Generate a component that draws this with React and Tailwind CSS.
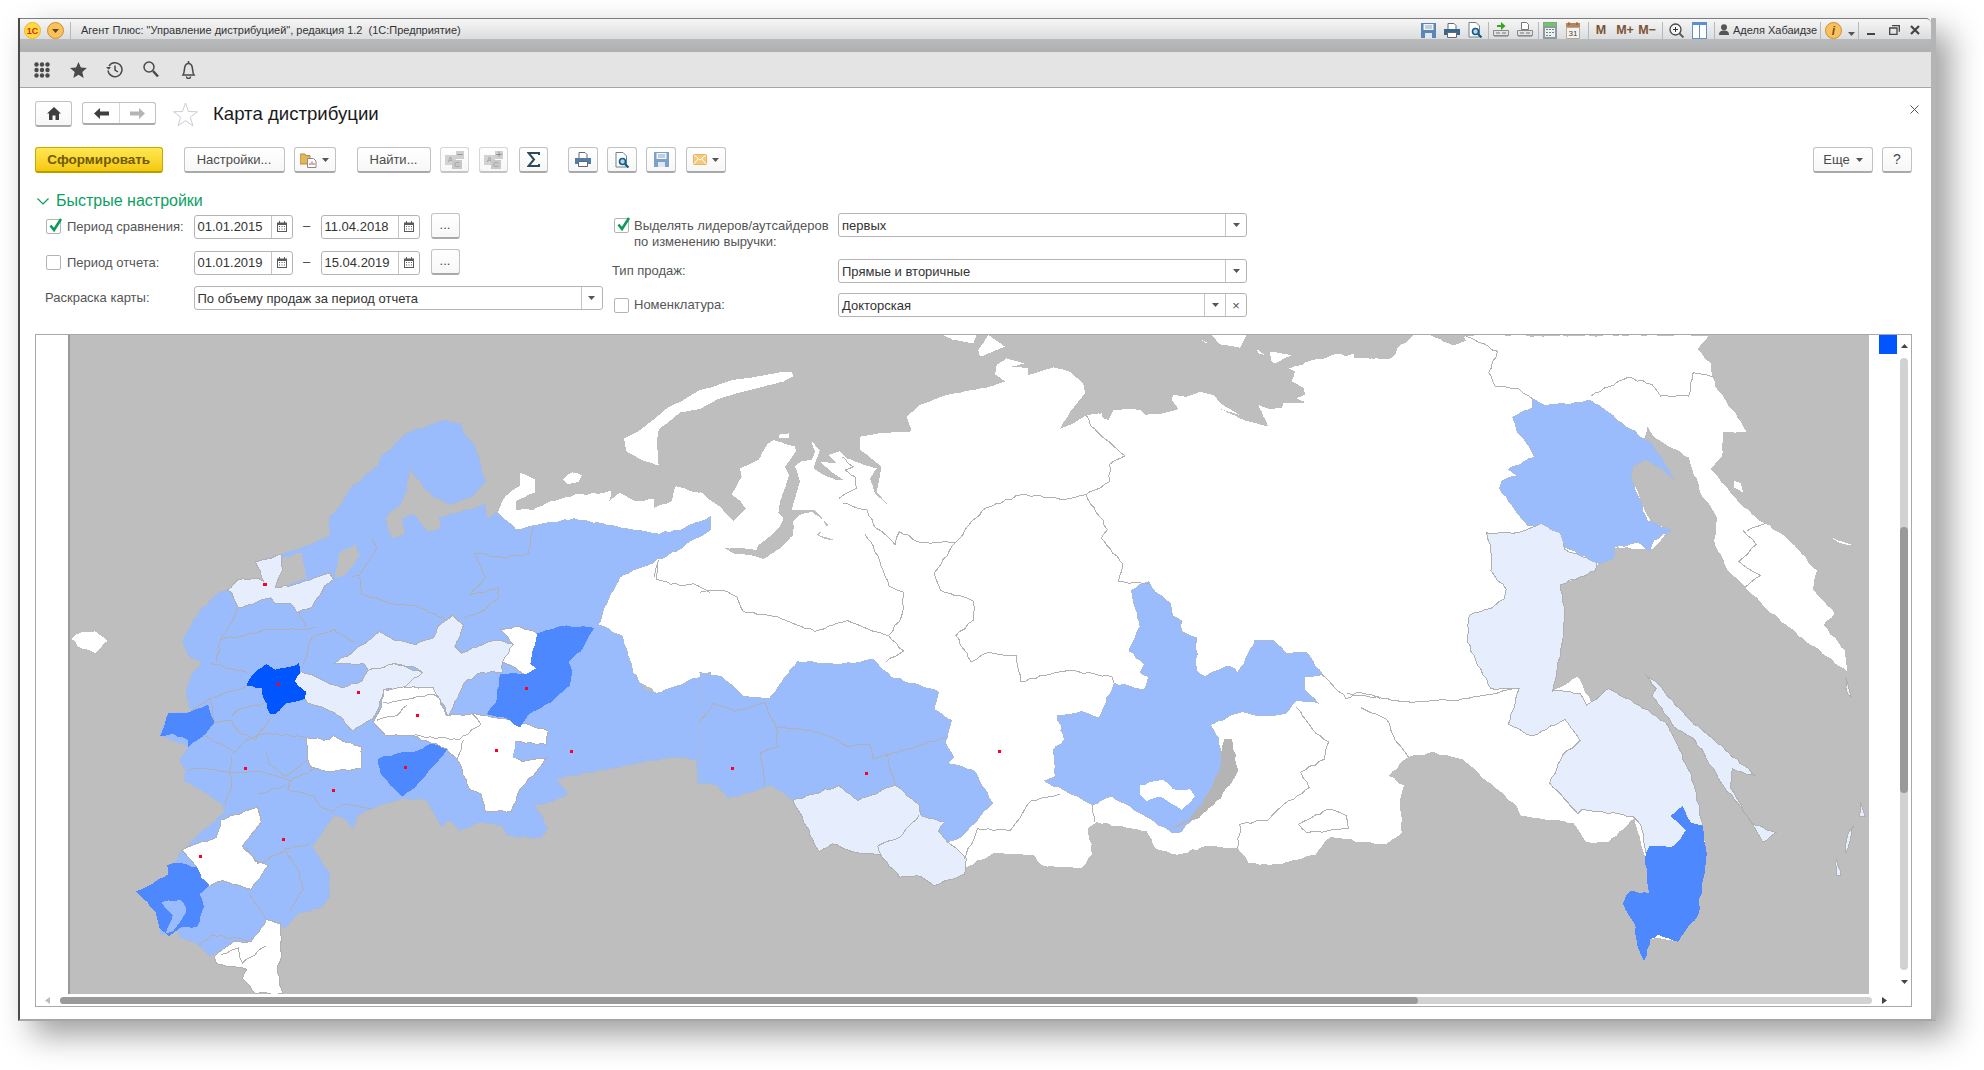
const FONT = { fontFamily: '"Liberation Sans", Arial, sans-serif' };

const SKY = '#9abbfc';
const PALE = '#e6edfd';
const MID = '#4d88ff';
const DEEP = '#0055ff';
const LINE = '#b0b0b0';

// coordinates were read off crops of the map
const Z4 = 'translate(30 330) scale(0.4336)';
const Z5 = 'translate(700 330) scale(0.4336)';
const Z6 = 'translate(1304 330) scale(0.4348 0.4719)';
const N1 = 'translate(700 335) scale(0.3333)';
const N2 = 'translate(1100 335) scale(0.3333)';

// breaks long straight edges into small wiggles, the source map is a rough raster
const hash = (a, b) => {
  const s = Math.sin(a * 12.9898 + b * 78.233) * 43758.5453;
  return s - Math.floor(s) - 0.5;
};

const rough = (points, closed, step = 11, amp = 5) => {
  const pts = points.trim().split(/\s+/).map((p) => p.split(',').map(Number));
  const out = [];
  const count = closed ? pts.length : pts.length - 1;
  for (let i = 0; i < count; i++) {
    const a = pts[i];
    const b = pts[(i + 1) % pts.length];
    out.push(a);
    const flip = a[0] > b[0] || (a[0] === b[0] && a[1] > b[1]);
    const [p, q] = flip ? [b, a] : [a, b];
    const dx = q[0] - p[0];
    const dy = q[1] - p[1];
    const len = Math.hypot(dx, dy);
    const n = Math.floor(len / step);
    const mids = [];
    for (let k = 1; k < n; k++) {
      const t = k / n;
      const off = hash(p[0] + k, p[1] + q[0] + q[1]) * amp;
      mids.push([p[0] + dx * t - (dy / len) * off, p[1] + dy * t + (dx / len) * off]);
    }
    if (flip) mids.reverse();
    out.push(...mids);
  }
  if (!closed) out.push(pts[pts.length - 1]);
  return out.map((c) => `${c[0].toFixed(1)},${c[1].toFixed(1)}`).join(' ');
};

const landZ5 = [
  '-467,425 -450,385 -415,360 -415,330 -380,345 -380,375 -425,395 -425,415 -385,415 -345,395 -275,378 -235,378 -205,370 -210,395 -185,375 -145,395 -105,390 -105,410 -65,395 -55,360 0,375 40,410 40,540 1568,540 1568,1185 1510,1175 1450,1170 1420,1210 1340,1232 1265,1230 1240,1195 1170,1190 1100,1210 1050,1195 1030,1155 915,1135 895,1150 905,1210 880,1240 790,1235 770,1210 680,1205 610,1240 570,1180 500,900 0,900 -467,600',
  '-315,345 -295,328 -273,335 -280,350 -305,355',
  '-1450,712 -1425,697 -1395,695 -1367,717 -1395,745 -1425,735',
];

const landN1 = [
  '0,470 30,495 60,515 100,558 138,522 120,497 95,480 125,425 120,400 175,375 205,325 220,315 285,335 288,350 255,395 268,420 240,500 235,535 250,550 240,575 215,600 175,630 170,645 130,640 100,640 75,640 100,655 150,660 190,672 240,640 280,600 280,560 300,540 335,530 370,555 380,575 350,600 375,612 405,615 370,605 355,600 385,570 345,525 275,525 300,440 285,395 305,378 335,375 345,350 335,320 360,345 340,400 370,420 410,435 430,435 400,415 360,380 410,385 385,360 420,348 440,370 510,395 530,400 510,430 525,475 565,510 530,470 545,395 520,375 480,345 480,305 540,295 630,290 610,305 635,285 620,245 660,210 740,180 870,155 915,140 885,118 890,90 920,70 975,85 935,95 985,100 985,120 1060,97 1110,110 1150,145 1155,175 1115,225 1060,310 1075,285 1120,265 1160,240 1205,235 1205,900 0,900',
  '-228,310 -189,291 -137,252 -98,219 -46,193 0,165 40,155 100,135 170,125 240,112 275,110 280,125 250,140 190,155 110,175 60,190 30,205 0,222 -59,232 -124,284 -130,323 -124,391 -176,375 -221,349',
  '240,298 268,295 268,308 235,310',
  '730,0 830,0 820,25 760,15',
  '865,0 915,35 840,65 835,45',
];

const landN2 = [
  '-5,235 10,250 25,255 40,225 80,222 120,225 135,240 190,235 235,222 215,195 220,180 260,185 300,170 340,180 365,208 395,225 420,240 360,222 440,258 505,275 475,210 510,222 545,220 550,205 620,205 590,190 635,172 595,150 575,140 585,110 565,100 630,82 690,72 660,95 700,95 715,115 700,80 760,55 765,75 815,70 860,75 890,65 905,35 940,0 990,0 1055,35 1100,15 1110,35 1090,5 1130,0 1215,0 1215,700 -5,700',
  '305,15 330,28 315,22',
  '470,42 495,60 475,55',
  '510,50 575,60 525,85 515,80',
  '335,0 440,0 420,38 360,28',
];

const landZ6 = [
  '0,70 50,60 75,50 120,60 200,60 225,30 260,12 290,12 355,38 385,30 370,12 930,12 905,40 935,70 945,120 985,170 1018,215 965,215 960,270 935,295 985,350 1030,390 1060,410 1110,440 1180,510 1170,550 1220,600 1195,625 1245,680 1250,725 1100,620 1015,545 975,510 945,455 950,400 910,340 885,270 835,245 800,220 790,205 750,310 800,410 840,425 800,465 720,460 680,495 590,540 590,680 572,765 630,735 660,790 700,790 700,760 770,795 830,830 850,890 890,940 915,1040 925,1110 905,1240 860,1295 800,1290 735,1215 750,1190 795,1195 785,1120 760,1035 700,1085 650,1085 620,1045 500,1030 490,1010 440,970 365,910 290,895 240,905 195,945 230,965 220,1000 225,1065 190,1090 60,1075 30,1105 0,1115',
  '990,320 1005,325 1010,345 990,335',
  '1215,440 1260,455 1225,448',
];

const baikal = '1210,945 1225,945 1240,1015 1200,1080 1150,1125 1085,1150 1130,1130 1170,1075 1200,1010';

const seaZ4 = [
  '585,525 625,515 637,570 585,590 565,595',
  '705,570 715,515 750,495 760,520 730,560',
];

const skyZ4 =
  '455,600 480,575 525,572 540,580 520,535 580,520 690,475 690,430 720,400 735,370 805,310 805,300 865,240 950,210 995,215 1000,240 1025,265 1050,350 1020,385 970,403 930,385 890,340 875,315 870,370 855,400 820,435 835,480 865,470 860,435 885,425 915,465 945,460 945,430 1035,408 1050,400 1055,435 1075,420 1120,460 1255,435 1440,470 1500,462 1570,430 1570,460 1470,520 1400,550 1360,570 1330,630 1310,680 1365,705 1390,790 1420,830 1445,838 1570,790 1570,1045 1540,1045 1535,990 1480,985 1290,1020 1215,1035 1240,1070 1195,1090 1165,1095 1195,1150 1180,1170 1130,1170 1100,1165 1090,1145 1040,1135 990,1155 965,1130 950,1145 915,1085 860,1080 830,1090 790,1105 755,1120 745,1150 730,1130 700,1120 680,1150 650,1190 690,1250 690,1310 665,1335 620,1345 590,1380 545,1360 510,1410 470,1410 450,1430 415,1445 390,1420 345,1400 340,1385 300,1395 300,1300 350,1200 450,1110 440,1090 400,1065 355,1040 360,1015 345,990 365,960 300,935 320,885 380,880 365,870 360,830 370,800 395,768 365,750 352,720 365,690 390,650 435,605';

const skyZ5 = [
  '0,790 50,800 100,845 160,850 225,765 330,770 400,760 440,800 550,835 540,875 580,900 565,950 585,985 570,1000 630,1015 675,1090 640,1130 600,1170 570,1180 550,1155 565,1135 510,1120 505,1095 450,1050 365,1085 320,1050 215,1085 165,1050 100,1070 65,1080 40,1050 0,1045',
  '995,600 1035,580 1050,605 1085,630 1090,660 1110,670 1110,695 1145,710 1145,785 1165,800 1220,775 1240,790 1255,770 1280,715 1320,715 1350,745 1400,745 1435,795 1395,800 1395,830 1425,860 1375,855 1350,885 1290,890 1250,880 1175,910 1195,940 1205,1010 1170,1070 1150,1110 1105,1160 1090,1160 1050,1135 950,1075 905,1095 870,1075 795,1040 820,1030 815,970 840,945 825,890 880,880 920,895 955,815 1025,830 1035,800 1015,790 1025,770 990,740 1015,685 1000,630',
];

const skyZ6 =
  '525,145 555,160 660,150 750,210 800,240 850,315 830,300 785,275 755,290 752,315 790,405 845,425 805,445 795,470 770,450 715,460 715,480 680,495 600,460 590,430 545,410 515,415 450,335 455,320 490,310 470,295 530,270 505,230 490,215 480,185 525,165';

const paleZ4 = [
  '455,600 480,575 525,572 540,580 520,535 580,517 582,555 565,595 620,585 690,560 700,575 680,590 650,640 615,652 600,630 565,630 555,618 480,640 465,605',
  '700,770 770,725 805,695 840,715 890,725 930,710 940,685 975,657 1000,680 980,730 995,745 1055,720 1085,715 1115,725 1090,765 1090,790 1040,790 1000,815 965,890 945,850 930,825 860,825 905,790 880,775 840,770 780,785 770,770 720,770',
  '610,800 625,788 660,800 720,825 765,810 780,785 840,770 905,790 860,825 815,830 805,870 790,897 745,925 720,895 675,870 640,860 610,820',
];

const paleZ5 = '215,1085 320,1050 365,1085 450,1050 505,1095 510,1120 565,1135 550,1155 570,1180 615,1220 610,1255 540,1282 510,1260 460,1262 415,1210 360,1205 305,1185 275,1203';

const paleZ6 = [
  '420,430 490,430 520,420 545,410 590,430 600,465 675,490 670,510 590,540 600,610 590,680 572,765 635,770 650,795 700,760 770,795 830,830 890,940 915,1040 915,1110 790,1115 775,1050 755,1030 640,1015 630,1025 565,960 595,900 635,870 600,825 525,860 470,835 495,760 430,760 395,700 375,660 380,605 430,590 460,570 465,550 430,510 430,470',
  '785,730 815,750 880,820 1040,945 985,930 980,970 1030,1045 1085,1065 1055,1085 1020,1030 960,960 900,870 850,840 800,775 810,760',
  '1245,735 1260,780 1250,770',
  '1280,1000 1290,1030 1278,1030',
  '1265,1050 1245,1110 1250,1070',
  '1225,1120 1235,1155 1225,1155',
];

const whiteZ4 = [
  '638,940 690,945 700,935 725,950 765,960 765,1010 700,1018 650,1010 640,985',
  '792,905 810,870 815,830 850,825 930,825 945,850 960,890 1020,885 1045,890 1090,895 1110,900 1195,925 1190,955 1120,950 1115,985 1135,995 1195,985 1130,1060 1110,1110 1050,1110 1040,1070 1015,1060 985,990 960,965 880,935 820,935',
  '1085,690 1130,685 1170,700 1160,740 1155,770 1170,780 1145,795 1090,765 1115,725',
  '350,1200 385,1185 430,1170 440,1130 525,1100 533,1135 490,1190 520,1225 550,1235 530,1265 510,1290 480,1280 445,1270 410,1285 395,1265 385,1240 360,1210',
  '425,1445 470,1410 510,1410 545,1360 578,1370 580,1440 570,1480 583,1530 520,1530 490,1495 500,1475 430,1462',
];

const midZ4 = [
  '1170,700 1225,683 1300,688 1270,740 1240,765 1250,790 1245,820 1210,850 1150,885 1130,915 1100,895 1055,885 1075,860 1085,795 1145,795 1170,780 1155,770 1160,740',
  '302,935 320,885 360,885 410,865 425,905 400,935 365,960 365,945 330,930',
  '803,990 845,978 885,975 925,955 950,965 960,968 925,1010 880,1060 860,1075 825,1040 810,1025',
  '245,1295 280,1280 320,1255 318,1235 345,1230 385,1240 395,1265 412,1280 390,1300 400,1330 385,1375 350,1375 320,1397 300,1380 290,1340 260,1310',
];

const midZ6 = '870,1010 890,1045 915,1050 925,1110 905,1240 860,1295 815,1280 795,1290 782,1335 770,1310 760,1255 735,1215 750,1190 795,1195 785,1120 795,1095 850,1095 880,1060 845,1030';

const deepZ4 = '500,820 515,795 545,772 565,785 620,770 622,790 610,810 636,835 632,850 590,860 565,885 555,885 540,850 535,825';

const bordersZ4 = [
  '480,640 470,665 440,715 430,765',
  '440,715 550,690 640,690 660,685',
  '415,768 500,790',
  '630,770 650,710 700,690 750,720',
  '620,650 635,685',
  '760,570 765,610 830,630 900,640 960,670',
  '1025,515 1090,525 1150,515 1155,490 1160,455',
  '1025,515 1050,570 1015,610 1080,595 1080,620 1040,650 1000,665',
  '790,480 800,500 790,520 760,565 740,570',
  '415,850 500,820',
  '370,880 415,850 425,905',
  '465,890 480,875 540,860',
  '465,900 480,925 520,945 555,895',
  '400,935 440,955 470,975 500,945 545,930 640,940',
  '545,975 550,1000 590,1030 640,990',
  '425,905 465,900',
  '365,1015 400,1010 460,1020 465,1050 450,1095',
  '465,985 460,1020 540,1020 600,1040',
  '600,1040 660,1010',
  '600,1040 595,1060 655,1075 670,1100 700,1110 720,1095 790,1105',
  '525,1070 590,1050',
  '500,1195 525,1230 570,1210 590,1195 645,1185',
  '590,1200 620,1250 630,1290 600,1340',
  '505,1300 545,1360',
  '390,1420 420,1395 510,1410',
  '815,860 850,855 930,840 945,850',
  '800,900 845,890 870,865',
  '880,935 990,945 1040,910 1020,885',
  '985,990 1000,945',
  '440,1440 480,1425 490,1460 545,1420',
  '1440,570 1450,530 1445,575 1500,590 1530,585 1568,605',
];

const bordersZ5 = [
  '0,605 50,600 85,615 100,650 170,660 265,695 340,670 400,695 435,705 470,740 430,765',
  '380,470 410,520 435,590 470,605 465,660 435,705',
  '400,450 450,495 460,465 510,490 590,490 620,450 660,410 740,380 830,390 890,380 940,460 925,480 975,540 965,580 1035,585',
  '590,490 540,560 555,600 630,625 630,670 590,705 625,765 660,745 730,750 740,810 850,785 950,800 955,815',
  '890,380 945,350 945,310 980,290 900,220 890,195',
  '330,400 385,415 400,450',
  '610,1220 640,1150 715,1155 765,1085 830,1070',
  '905,1095 910,1135',
  '1435,795 1490,850 1520,835 1568,850',
  '1375,870 1420,930 1450,950 1440,990 1385,1020 1405,1055 1340,1100 1310,1130 1245,1140 1240,1195',
  '1380,1140 1450,1105 1490,1120 1495,1150 1400,1160 1380,1140',
  '0,905 30,860 80,880 150,860 175,915 280,930 340,960 390,955 400,990 565,940',
  '175,915 180,960 140,975 150,1050',
  '430,975 450,1050',
  '505,1120 460,1170 410,1190 420,1215',
];

const bordersN1 = [
  '418,490 470,460 465,425 435,405 460,395 425,365',
];

const bordersZ6 = [
  '370,12 445,45 425,90 440,120 495,125 525,145',
  '660,140 745,100 800,115 820,140 885,140 895,90 945,100',
  '100,770 250,790 380,780 490,760',
  '130,800 190,825 210,870 240,905',
  '1010,425 1040,455 1000,490 1050,520 1015,545',
  '1060,410 1020,425',
];

const dotsZ4 = [[542, 586], [572, 817], [757, 835], [893, 888], [1144, 826], [1075, 969], [1248, 971], [867, 1008], [496, 1011], [699, 1061], [584, 1174], [393, 1214]];
const dotsZ5 = [[74, 1011], [383, 1022], [690, 971]];

const Fill = ({ items, fill, edge = LINE, amp = 5 }) =>
  [].concat(items).map((p, i) => (
    <polygon key={i} points={rough(p, true, 11, amp)} fill={fill} stroke={edge} strokeWidth="1" vectorEffect="non-scaling-stroke" />
  ));

const Lines = ({ items }) =>
  items.map((p, i) => (
    <polyline key={i} points={rough(p, false)} fill="none" stroke={LINE} strokeWidth="1" vectorEffect="non-scaling-stroke" />
  ));

const Dots = ({ items }) =>
  items.map(([x, y]) => <rect key={x} x={x - 3.5} y={y - 3.5} width="7" height="7" fill="#ff0022" />);

const DistributionMap = () => (
  <svg viewBox="70 335 1799 659" className="w-[1799px] h-[659px] block shrink-0" shapeRendering="crispEdges">
    <rect x="70" y="335" width="1799" height="659" fill="#bebebe" />
    <g transform={Z5}><Fill items={landZ5} fill="#ffffff" edge="none" /></g>
    <g transform={N1}><Fill items={landN1} fill="#ffffff" edge="none" amp={2} /></g>
    <g transform={N2}><Fill items={landN2} fill="#ffffff" edge="none" amp={2} /></g>
    <g transform={Z6}><Fill items={landZ6} fill="#ffffff" edge="none" /></g>
    <g transform={Z4}>
      <Fill items={skyZ4} fill={SKY} edge="#a9bbdc" />
      <Fill items={seaZ4} fill="#bebebe" edge="#bebebe" />
      <Fill items={paleZ4} fill={PALE} />
    </g>
    <g transform={Z5}>
      <Fill items={skyZ5} fill={SKY} edge="#a9bbdc" />
      <Fill items="1015,1050 1070,1040 1090,1060 1130,1060 1140,1075 1110,1105 1060,1075 1030,1085 1015,1070" fill="#ffffff" edge="#ffffff" />
      <Fill items={paleZ5} fill={PALE} />
      <Fill items={baikal} fill="#b4b4b4" edge="#b4b4b4" />
    </g>
    <g transform={Z6}>
      <Fill items={paleZ6} fill={PALE} />
      <Fill items={skyZ6} fill={SKY} edge="#a9bbdc" />
      <Fill items={midZ6} fill={MID} edge={MID} />
    </g>
    <g transform={Z4}>
      <Fill items={whiteZ4} fill="#ffffff" />
      <Fill items={midZ4} fill={MID} edge={MID} />
      <Fill items="305,1320 345,1315 360,1335 345,1365 330,1385 315,1390 330,1350" fill={SKY} edge={SKY} />
      <Fill items="1115,985 1120,950 1170,970 1140,985" fill={SKY} edge={SKY} />
      <Fill items={deepZ4} fill={DEEP} edge={DEEP} />
      <Lines items={bordersZ4} />
      <Dots items={dotsZ4} />
    </g>
    <g transform={Z5}>
      <Lines items={bordersZ5} />
      <Dots items={dotsZ5} />
    </g>
    <g transform={N1}><Lines items={bordersN1} /></g>
    <g transform={Z6}><Lines items={bordersZ6} /></g>
  </svg>
);

const Caret = ({ color = '#555' }) => (
  <svg width="7" height="4" viewBox="0 0 7 4"><path d="M0 0h7L3.5 4z" fill={color} /></svg>
);

const Btn = ({ className = '', children }) => (
  <button className={`h-[26px] flex items-center justify-center rounded-[3px] border border-[#c2c2c2] border-b-2 border-b-[#a9a9a9] bg-gradient-to-b from-white to-[#f7f7f7] text-[13px] text-[#4b4b4b] shrink-0 ${className}`}>
    {children}
  </button>
);

const Check = ({ on }) => (
  <span className="relative w-[15px] h-[15px] rounded-[2px] border border-[#b4b4b4] bg-white shrink-0 block">
    {on && (
      <svg className="absolute left-[1px] -top-[3px]" width="15" height="16" viewBox="0 0 15 16">
        <path d="M2.5 8.5 L6 13 L13 2" fill="none" stroke="#0c9a5a" strokeWidth="2.6" />
      </svg>
    )}
  </span>
);

const CalIcon = () => (
  <svg width="10" height="11" viewBox="0 0 10 11">
    <path d="M0 1.5h10V11H0z" fill="#5a5a5a" />
    <path d="M1 4h8v6H1z" fill="#fff" />
    <path d="M2 5h1v1H2zM4.5 5h1v1h-1zM7 5h1v1H7zM2 7.5h1v1H2zM4.5 7.5h1v1h-1zM7 7.5h1v1H7z" fill="#5a5a5a" />
    <path d="M2 0h1v2H2zM7 0h1v2H7z" fill="#5a5a5a" />
  </svg>
);

const DateField = ({ value }) => (
  <div className="w-[99px] h-[24px] mt-[1px] flex rounded-[3px] border border-[#b4b4b4] bg-white text-[13px] text-[#333] shrink-0">
    <span className="w-[77px] pl-[3px] leading-[22px] border-r border-[#c6c6c6]">{value}</span>
    <span className="flex-1 flex items-center justify-center"><CalIcon /></span>
  </div>
);

const Select = ({ value, width, clear }) => (
  <div className={`h-[24px] flex rounded-[3px] border border-[#b4b4b4] bg-white text-[13px] text-[#333] shrink-0 ${width}`}>
    <span className="flex-1 pl-[3px] leading-[23px]">{value}</span>
    <span className="w-[21px] flex items-center justify-center border-l border-[#c6c6c6]"><Caret /></span>
    {clear && <span className="w-[21px] flex items-center justify-center border-l border-[#c6c6c6] text-[13px] text-[#555] leading-none">×</span>}
  </div>
);

const DateRow = ({ on, label, from, to, className = '' }) => (
  <div className={`h-[26px] flex items-center ${className}`}>
    <span className="w-[158.5px] flex items-center pl-[11px] gap-[6px] pt-[1px]">
      <Check on={on} />
      <span className="text-[13px] text-[#555] whitespace-nowrap">{label}</span>
    </span>
    <DateField value={from} />
    <span className="w-[28px] text-center text-[13px] text-[#444]">–</span>
    <DateField value={to} />
    <Btn className="ml-[11px] w-[29px] text-[10px] pb-[2px]">...</Btn>
  </div>
);

const Slot = ({ w, children }) => (
  <span className={`flex items-center justify-center shrink-0 ${w}`}>{children}</span>
);

const Sep = ({ className = '' }) => <span className={`w-px h-[17px] bg-[#b8b8b8] shrink-0 ${className}`} />;

const SaveIcon = ({ c = '#5c86b4' }) => (
  <svg width="15" height="15" viewBox="0 0 15 15">
    <path d="M0 0h15v15H0z" fill={c} />
    <path d="M2.5 1h10v6h-10z" fill="#f2f6fb" />
    <path d="M4 10h7v5H4z" fill="#dfe8f2" />
    <path d="M4 3h7M4 5h7" stroke="#8aa8c8" />
  </svg>
);

const PrintIcon = ({ c = '#38668e' }) => (
  <svg width="16" height="15" viewBox="0 0 16 15">
    <path d="M4 .5h6l2 2v4H4z" fill="#fff" stroke="#667" />
    <path d="M0 6h16v6H0z" fill={c} />
    <path d="M3.5 9.5h9v5h-9z" fill="#fff" stroke="#667" />
  </svg>
);

const PreviewIcon = () => (
  <svg width="15" height="16" viewBox="0 0 15 16">
    <path d="M1 .5h7l3.5 3.5v11H1z" fill="#fff" stroke="#6f7f8f" />
    <circle cx="7.5" cy="9.5" r="3" fill="#bcd4e8" stroke="#0f5d86" strokeWidth="1.6" />
    <path d="M10 12l3.5 3.5" stroke="#0f5d86" strokeWidth="2.2" />
  </svg>
);

const TrayIcon = ({ arrow }) => (
  <svg width="16" height="16" viewBox="0 0 16 16">
    {arrow
      ? <path d="M4 3h4V0l4.5 4L8 8V5H4z" fill="#37a51c" />
      : <path d="M4.5.5h5l2 2v5h-7z" fill="#fff" stroke="#777" />}
    <path d="M.5 8.5h15v5H.5z" fill="#e3e3e3" stroke="#8a8a8a" />
    <path d="M3 11h4M9 11h4" stroke="#777" />
    <path d="M1 14.5h14" stroke="#a9a9a9" />
  </svg>
);

const AbcIcon = ({ sign }) => (
  <span className="relative w-[19px] h-[18px] block">
    <span className="absolute left-0 top-[4px] w-[11px] h-[10px] bg-[#d2d2d2] text-[8px] leading-[10px] text-[#9b9b9b] text-center">A</span>
    <span className="absolute left-[7px] top-[9px] w-[10px] h-[9px] bg-[#c8c8c8] text-[8px] leading-[9px] text-[#9b9b9b] text-center">C</span>
    <span className="absolute left-[11px] top-0 w-[8px] h-[8px] bg-[#cfcfcf] text-[11px] leading-[7px] text-[#8d8d8d] text-center">{sign}</span>
  </span>
);

const TitleMenu = () => (
  <div className="h-[34px] shrink-0 flex items-start pl-[4px] bg-[linear-gradient(to_bottom,#f6f6f6_0%,#dcdddf_60%,#b9babc_62%,#aeafb1_100%)] rounded-tr-[5px] border-t border-[#7d7d7d]">
    <div className="h-[22px] w-full flex items-center">
      <svg width="17" height="17" viewBox="0 0 17 17" className="shrink-0">
        <circle cx="8.5" cy="8.5" r="8" fill="#ffdc3c" stroke="#e8b533" />
        <text x="8.5" y="11.5" textAnchor="middle" fontSize="9" fontWeight="700" fill="#e2231a" style={FONT}>1С</text>
      </svg>
      <svg width="17" height="17" viewBox="0 0 17 17" className="ml-[6px] shrink-0">
        <circle cx="8.5" cy="8.5" r="8" fill="#fbc25b" stroke="#c98e33" />
        <path d="M5 7h7l-3.5 4z" fill="#5b4a2e" />
      </svg>
      <Sep className="ml-[6px]" />
      <span className="ml-[10px] text-[11px] text-[#333] whitespace-pre">Агент Плюс: "Управление дистрибуцией", редакция 1.2  (1С:Предприятие)</span>
      <div className="ml-auto flex items-center pr-[6px]">
        <Slot w="w-[23px]"><SaveIcon /></Slot>
        <Slot w="w-[23px]"><PrintIcon /></Slot>
        <Slot w="w-[24px]"><PreviewIcon /></Slot>
        <Sep className="ml-[1px]" />
        <Slot w="w-[24px]"><TrayIcon arrow /></Slot>
        <Slot w="w-[23px]"><TrayIcon /></Slot>
        <Sep className="ml-[2px]" />
        <Slot w="w-[22px]">
          <svg width="14" height="17" viewBox="0 0 14 17">
            <path d="M0 0h14v17H0z" fill="#8a9aa0" />
            <path d="M1 1h12v3H1z" fill="#6fca5a" />
            <path d="M2 6h10v9H2z" fill="#eef0f0" />
            <path d="M3 7h2v1H3zM6 7h2v1H6zM9 7h2v1H9zM3 10h2v1H3zM6 10h2v1H6zM9 10h2v1H9zM3 13h2v1H3zM6 13h2v1H6z" fill="#77838a" />
          </svg>
        </Slot>
        <Slot w="w-[24px]">
          <svg width="14" height="17" viewBox="0 0 14 17">
            <path d="M0 1h14v16H0z" fill="#f6f3ee" />
            <path d="M0 1h14v4H0z" fill="#b9845a" />
            <path d="M3 0v3M11 0v3" stroke="#7d5433" />
            <path d="M.5 5.5h13v11H.5z" fill="none" stroke="#b3a99e" />
            <text x="7" y="14" textAnchor="middle" fontSize="8" fill="#444" style={FONT}>31</text>
          </svg>
        </Slot>
        <Sep className="ml-[3px]" />
        <Slot w="w-[24px]"><span className="text-[12.5px] font-bold text-[#7b5331]">M</span></Slot>
        <Slot w="w-[24px]"><span className="text-[12.5px] font-bold text-[#7b5331]">M+</span></Slot>
        <Slot w="w-[20px]"><span className="text-[12.5px] font-bold text-[#7b5331]">M−</span></Slot>
        <Sep className="ml-[5px]" />
        <Slot w="w-[26px]">
          <svg width="15" height="15" viewBox="0 0 15 15">
            <circle cx="6.5" cy="6.5" r="5.5" fill="#f5f5f5" stroke="#444" strokeWidth="1.3" />
            <path d="M4 6.5h5M6.5 4v5" stroke="#333" />
            <path d="M10.5 10.5l4 4" stroke="#555" strokeWidth="1.8" />
          </svg>
        </Slot>
        <Slot w="w-[20px]">
          <svg width="15" height="17" viewBox="0 0 15 17">
            <path d="M0 0h15v17H0z" fill="#5b8fcf" />
            <path d="M1 3h6v13H1zM8 3h6v13H8z" fill="#fff" />
          </svg>
        </Slot>
        <Sep className="ml-[5px]" />
        <span className="ml-[4px] w-[14px] shrink-0">
          <svg width="10" height="12" viewBox="0 0 10 12">
            <circle cx="5" cy="3.2" r="3" fill="#555" />
            <path d="M0 11c0-3.5 2-4.5 5-4.5S10 7.5 10 11z" fill="#555" />
          </svg>
        </span>
        <span className="w-[87px] text-[11px] text-[#333] whitespace-nowrap">Аделя Хабаидзе</span>
        <Sep />
        <Slot w="w-[24px]">
          <svg width="17" height="17" viewBox="0 0 17 17">
            <circle cx="8.5" cy="8.5" r="8" fill="#fbc25b" stroke="#c98e33" />
            <text x="8.5" y="13" textAnchor="middle" fontSize="12" fontWeight="700" fontStyle="italic" fill="#6c5226" style={FONT}>i</text>
          </svg>
        </Slot>
        <Slot w="w-[12px]"><span className="mt-[8px]"><Caret color="#555" /></span></Slot>
        <Sep className="ml-[1px]" />
        <Slot w="w-[24px]"><span className="w-[8px] h-[2px] bg-[#444] mt-[8px]" /></Slot>
        <Slot w="w-[22px]">
          <svg width="11" height="10" viewBox="0 0 11 10" fill="none" stroke="#444" strokeWidth="1.3">
            <path d="M3 .7h7.3v6M.7 3h7.3v6.3H.7z" />
          </svg>
        </Slot>
        <Slot w="w-[20px]">
          <svg width="10" height="10" viewBox="0 0 10 10"><path d="M1 1l8 8M9 1L1 9" stroke="#444" strokeWidth="2.2" /></svg>
        </Slot>
      </div>
    </div>
  </div>
);

const Toolbar = () => (
  <div className="h-[36px] shrink-0 flex items-center pl-[14px] bg-[#e4e4e4] border-b border-[#a6a6a6]">
    <svg width="16" height="16" viewBox="0 0 16 16" className="shrink-0" fill="#4a4a4a">
      <circle cx="2.5" cy="2.5" r="2.2" /><circle cx="8" cy="2.5" r="2.2" /><circle cx="13.5" cy="2.5" r="2.2" />
      <circle cx="2.5" cy="8" r="2.2" /><circle cx="8" cy="8" r="2.2" /><circle cx="13.5" cy="8" r="2.2" />
      <circle cx="2.5" cy="13.5" r="2.2" /><circle cx="8" cy="13.5" r="2.2" /><circle cx="13.5" cy="13.5" r="2.2" />
    </svg>
    <svg width="17" height="16" viewBox="0 0 17 16" className="ml-[20px] shrink-0">
      <path d="M8.5 0l2.4 5.5 6 .5-4.600 3.900 1.400 6-5.200-3.200-5.200 3.200 1.400-6L0 6l6-.5z" fill="#4a4a4a" />
    </svg>
    <svg width="17" height="17" viewBox="0 0 17 17" className="ml-[19px] shrink-0" fill="none" stroke="#4a4a4a" strokeWidth="1.5">
      <path d="M3 5A7 7 0 1 1 2 9.5" />
      <path d="M0 6l2.7 2.7L5 6" fill="#4a4a4a" stroke="none" />
      <path d="M9 4.5V9l3 2" />
    </svg>
    <svg width="16" height="17" viewBox="0 0 16 17" className="ml-[20px] shrink-0" fill="none" stroke="#4a4a4a">
      <circle cx="6" cy="6" r="5" strokeWidth="1.5" />
      <path d="M10 10l5 5.500" strokeWidth="2.5" />
    </svg>
    <svg width="15" height="18" viewBox="0 0 15 18" className="ml-[22px] shrink-0" fill="none" stroke="#4a4a4a" strokeWidth="1.5">
      <path d="M2 14c1.5-2 1.2-5 1.7-7.500C4.200 4 5.500 2.500 7.500 2.500s3.300 1.500 3.800 4c.5 2.500.2 5.500 1.700 7.500z" />
      <path d="M7.500 0v2M5.500 15.500a2 2 0 0 0 4 0" />
    </svg>
  </div>
);

const CommandBar = () => (
  <div className="mt-[22px] flex items-center">
    <button className="w-[127.5px] h-[26px] pt-[1px] rounded-[3px] border border-[#c9a800] border-b-2 border-b-[#bb9c00] bg-gradient-to-b from-[#ffe84f] to-[#f4c800] text-[13.5px] font-bold text-[#6f5a00] shrink-0">Сформировать</button>
    <Btn className="ml-[21px] w-[101px] pt-[1px]">Настройки...</Btn>
    <Btn className="ml-[9.5px] w-[41.5px] gap-[5px]">
      <svg width="17" height="16" viewBox="0 0 17 16">
        <path d="M0 2h5l1 1.500h4V12H0z" fill="#e3b65d" stroke="#b78d3b" />
        <path d="M7.500 6.500h6l2.500 2.500v6.500H7.500z" fill="#fff" stroke="#8a8a8a" />
        <path d="M10 13V11M12 13V9.500M14 13v-2" stroke="#d24a3c" />
      </svg>
      <Caret />
    </Btn>
    <Btn className="ml-[21px] w-[74px] pt-[1px]">Найти...</Btn>
    <Btn className="ml-[9.5px] w-[29px] border-[#d6d6d6] border-b-[#c4c4c4]"><AbcIcon sign="−" /></Btn>
    <Btn className="ml-[10px] w-[29px] border-[#d6d6d6] border-b-[#c4c4c4]"><AbcIcon sign="+" /></Btn>
    <Btn className="ml-[10.5px] w-[29px]">
      <svg width="13" height="15" viewBox="0 0 13 15"><path d="M12 3V1H1.500L7 7.500 1.500 14H12v-2" fill="none" stroke="#2f4a5a" strokeWidth="2" /></svg>
    </Btn>
    <Btn className="ml-[20.5px] w-[30px]"><PrintIcon c="#4f7ea6" /></Btn>
    <Btn className="ml-[9px] w-[30px]"><PreviewIcon /></Btn>
    <Btn className="ml-[9px] w-[30px]"><SaveIcon c="#7ca0c8" /></Btn>
    <Btn className="ml-[9.5px] w-[40.5px] gap-[5px]">
      <svg width="14" height="11" viewBox="0 0 14 11">
        <path d="M0 0h14v11H0z" fill="#f5c87a" stroke="#d9a24f" />
        <path d="M.5 .5L7 6l6.500-5.500M.5 10.500L5 5M13.500 10.500L9 5" fill="none" stroke="#fff" />
      </svg>
      <Caret />
    </Btn>
    <Btn className="ml-auto w-[60px] gap-[6px] pt-[1px]">Еще <Caret /></Btn>
    <Btn className="ml-[9px] mr-[19px] w-[30px] text-[14px]">?</Btn>
  </div>
);

const QuickSettings = () => (
  <div className="mt-[2px] flex">
    <div className="w-[577px] shrink-0">
      <DateRow on label="Период сравнения:" from="01.01.2015" to="11.04.2018" />
      <DateRow label="Период отчета:" from="01.01.2019" to="15.04.2019" className="mt-[10px]" />
      <div className="mt-[11px] h-[24px] flex items-center">
        <span className="w-[158.5px] pl-[10px] text-[13px] text-[#555]">Раскраска карты:</span>
        <Select value="По объему продаж за период отчета" width="w-[409px]" />
      </div>
    </div>
    <div>
      <div className="h-[24px] flex">
        <div className="w-[226px] pl-[2px] flex gap-[5px] pt-[5px]">
          <Check on />
          <span className="text-[13px] leading-[16px] text-[#555] whitespace-nowrap">Выделять лидеров/аутсайдеров<br />по изменению выручки:</span>
        </div>
        <Select value="первых" width="w-[409px]" />
      </div>
      <div className="mt-[22px] h-[24px] flex items-center">
        <span className="w-[226px] text-[13px] text-[#555]">Тип продаж:</span>
        <Select value="Прямые и вторичные" width="w-[409px]" />
      </div>
      <div className="mt-[10px] h-[24px] flex items-center">
        <span className="w-[226px] pl-[2px] flex items-center gap-[5px]">
          <Check />
          <span className="text-[13px] text-[#555]">Номенклатура:</span>
        </span>
        <Select value="Докторская" width="w-[409px]" clear />
      </div>
    </div>
  </div>
);

const MapPanel = () => (
  <div className="mt-[17px] w-[1877px] h-[673px] border border-[#a9a9a9] flex flex-col bg-white shrink-0">
    <div className="flex h-[659px] shrink-0">
      <div className="w-[34px] border-r-2 border-[#999] shrink-0" />
      <DistributionMap />
      <div className="flex-1 relative">
        <span className="absolute left-[10px] top-0 w-[18px] h-[19px] bg-[#0055ff]" />
        <span className="absolute left-[32px] top-[9px] rotate-180 flex"><Caret color="#444" /></span>
        <div className="absolute left-[31px] top-[23px] w-[8px] h-[612px] rounded-full bg-[#d2d2d2]">
          <div className="relative top-[169px] h-[266px] rounded-full bg-[#9a9a9a]" />
        </div>
        <span className="absolute left-[32px] top-[645px] flex"><Caret color="#444" /></span>
      </div>
    </div>
    <div className="h-[13px] flex items-center relative">
      <svg width="5" height="7" viewBox="0 0 5 7" className="ml-[9px] shrink-0"><path d="M5 0v7L0 3.5z" fill="#bdbdbd" /></svg>
      <div className="ml-[10px] w-[1812px] h-[7px] rounded-full bg-[#d2d2d2] shrink-0">
        <div className="w-[1358px] h-[7px] rounded-full bg-[#9a9a9a]" />
      </div>
      <svg width="5" height="7" viewBox="0 0 5 7" className="ml-[10px] shrink-0"><path d="M0 0v7L5 3.5z" fill="#444" /></svg>
    </div>
  </div>
);

export default function App() {
  return (
    <div className="w-[1984px] h-[1070px] bg-white pt-[18px] pl-[18px] overflow-hidden" style={FONT}>
      <div className="w-[1918px] h-[1003px] flex flex-col border-l-2 border-l-[#4a4a4a] border-r-[5px] border-r-[#b4b4b4] border-b-2 border-b-[#a6a6a6] shadow-[14px_14px_30px_rgba(0,0,0,0.38)] bg-white">
        <TitleMenu />
        <Toolbar />
        <div className="flex-1 pl-[15px] flex flex-col">
          <div className="mt-[14px] h-[23px] flex items-center">
            <Btn className="w-[37px] h-[23px]">
              <svg width="14" height="13" viewBox="0 0 14 13"><path d="M7 0l7 6.5h-2V13H8.500V8.500h-3V13H2V6.500H0z" fill="#3f3f3f" /></svg>
            </Btn>
            <div className="ml-[10px] w-[74px] h-[23px] flex rounded-[3px] border border-[#c2c2c2] border-b-2 border-b-[#a9a9a9] bg-white shrink-0">
              <span className="w-[37px] flex items-center justify-center border-r border-[#d8d8d8]">
                <svg width="15" height="11" viewBox="0 0 15 11"><path d="M0 5.5L6 0v3.500h9v4H6V11z" fill="#3f3f3f" /></svg>
              </span>
              <span className="flex-1 flex items-center justify-center">
                <svg width="15" height="11" viewBox="0 0 15 11"><path d="M15 5.500L9 0v3.500H0v4h9V11z" fill="#b5b5b5" /></svg>
              </span>
            </div>
            <svg width="25" height="24" viewBox="0 0 25 24" className="ml-[17px] shrink-0">
              <path d="M12.500 1l3 8.500 9 .3-7.200 5.400 2.600 8.600-7.400-5.100-7.400 5.100 2.600-8.600L.5 9.800l9-.3z" fill="#fff" stroke="#c9cdd2" />
            </svg>
            <h1 className="ml-[15px] pt-[1px] text-[18.6px] text-[#1a1a1a] font-normal">Карта дистрибуции</h1>
            <svg width="9" height="9" viewBox="0 0 9 9" className="ml-auto mr-[12px] mb-[8px] shrink-0"><path d="M.5.5l8 8M8.500.5l-8 8" stroke="#555" /></svg>
          </div>
          <CommandBar />
          <div className="mt-[18px] h-[20px] flex items-center">
            <svg width="12" height="7" viewBox="0 0 12 7" className="ml-[2px] shrink-0"><path d="M.5.5L6 6l5.500-5.500" fill="none" stroke="#0d9a5f" strokeWidth="1.2" /></svg>
            <span className="ml-[7px] text-[16px] text-[#0a9f5f]">Быстрые настройки</span>
          </div>
          <QuickSettings />
          <MapPanel />
        </div>
      </div>
    </div>
  );
}
